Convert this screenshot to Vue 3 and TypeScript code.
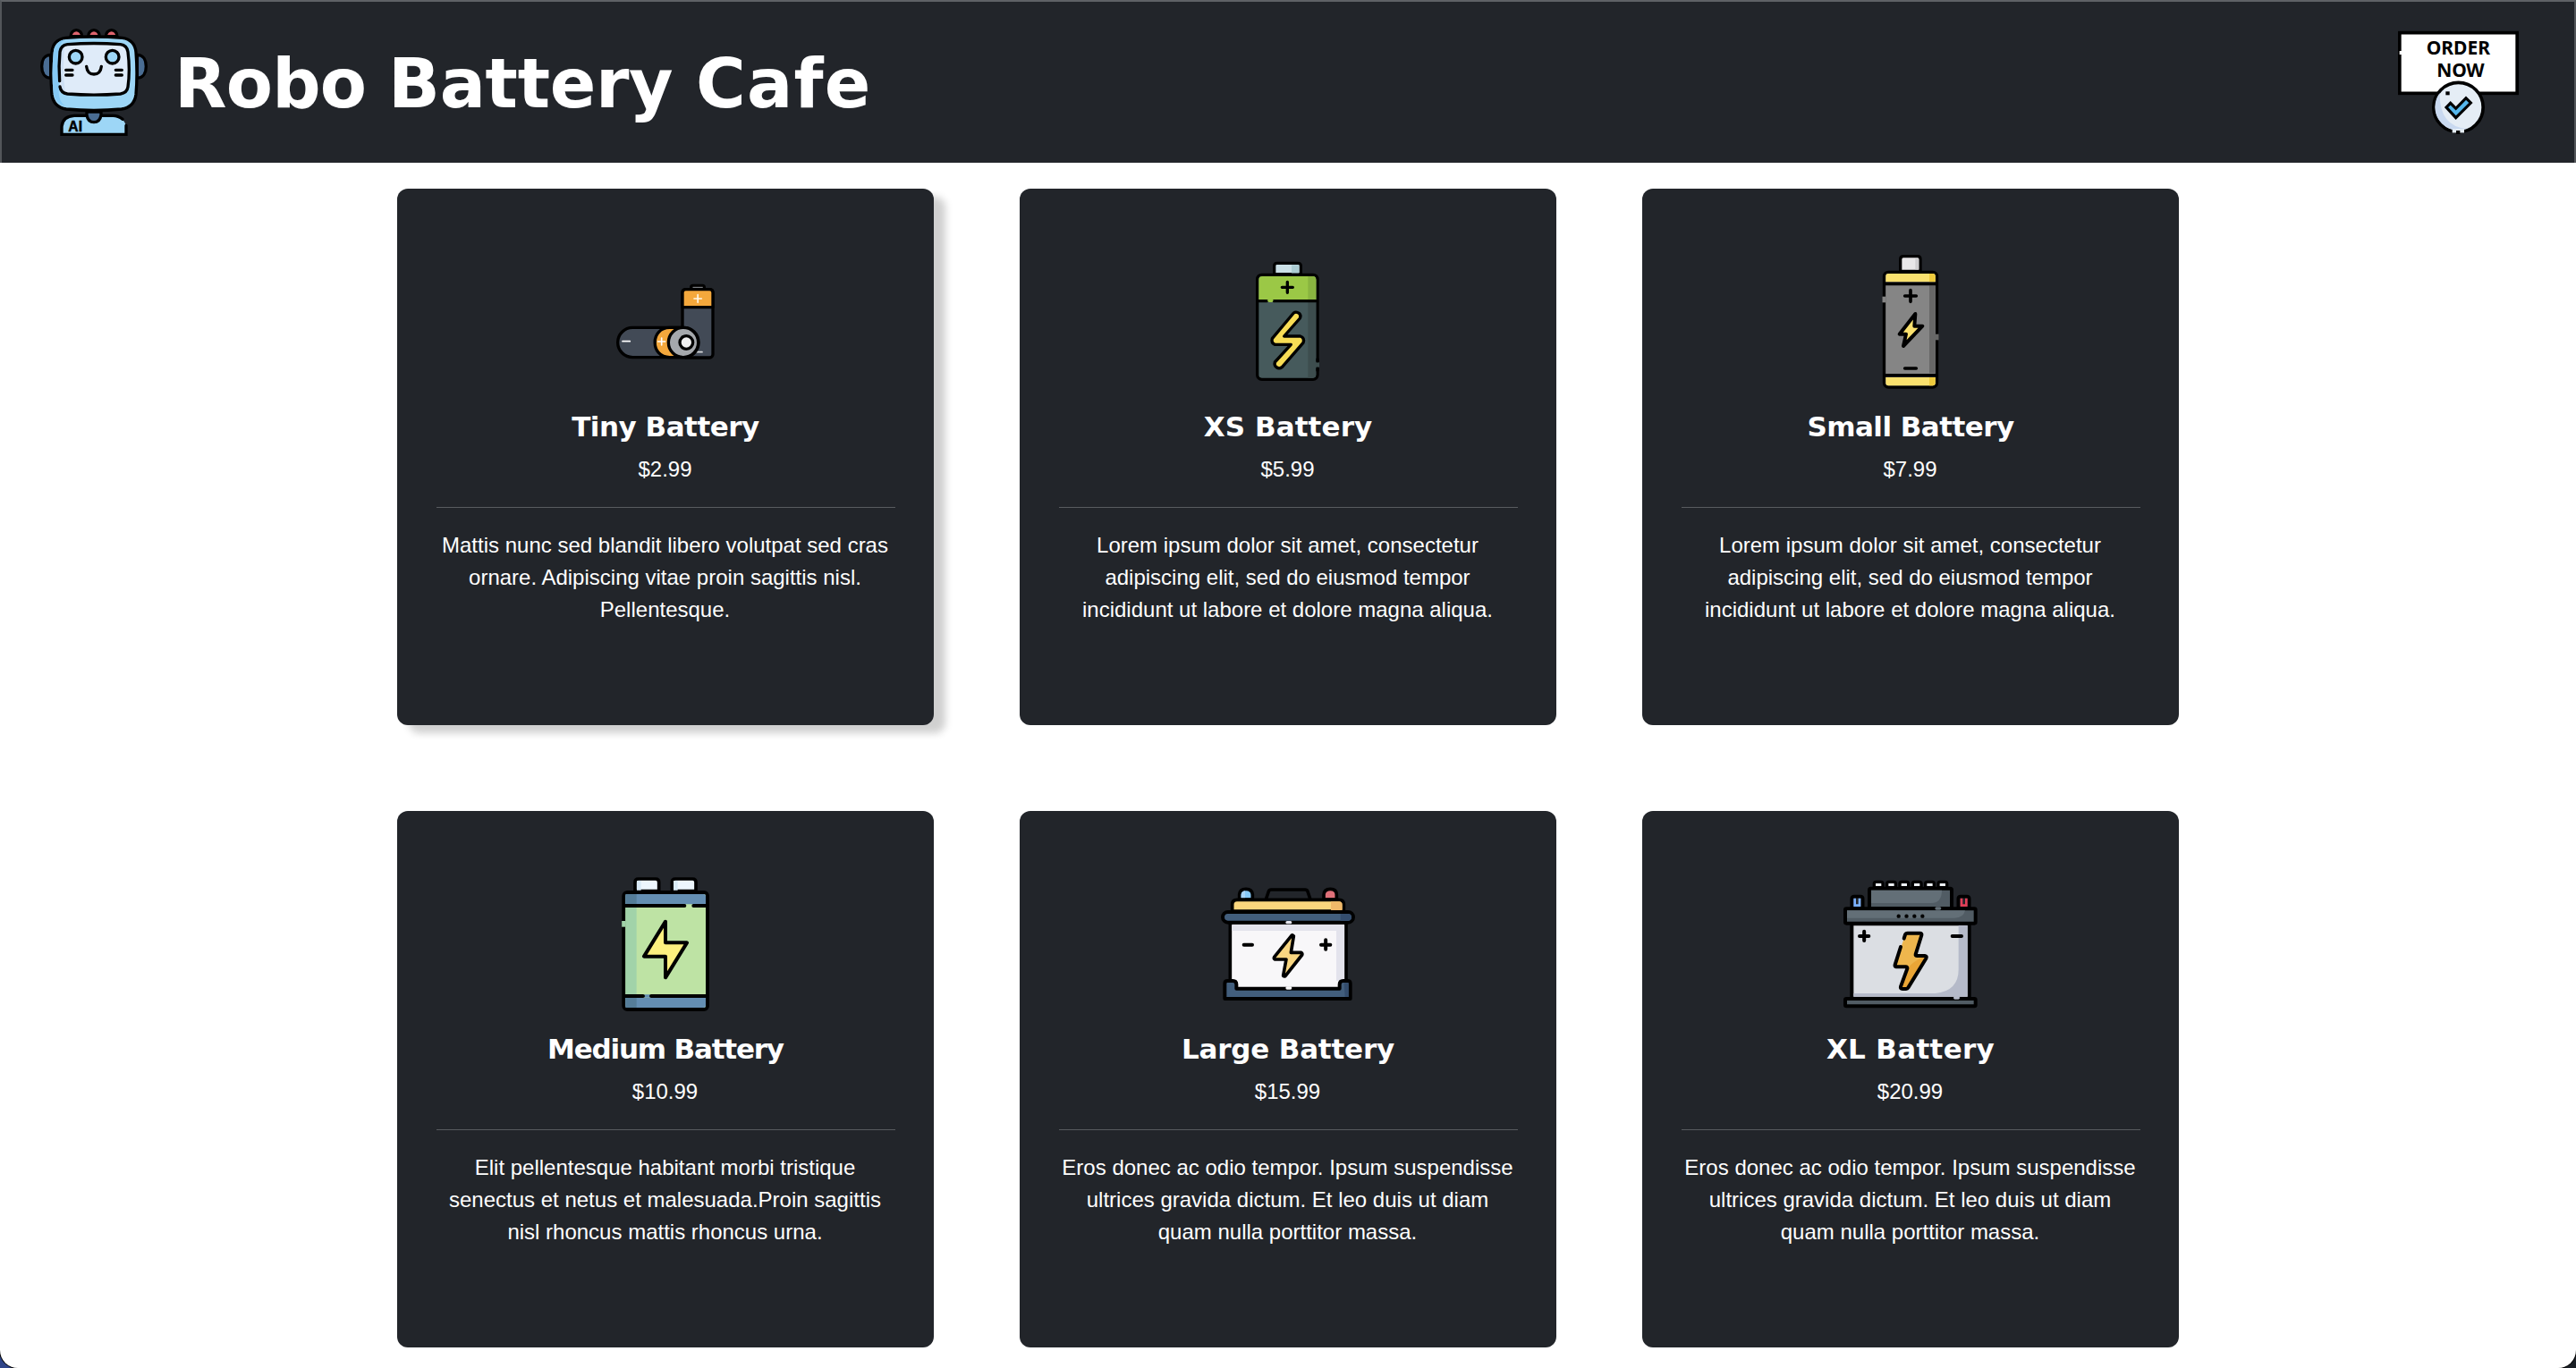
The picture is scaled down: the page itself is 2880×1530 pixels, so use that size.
<script setup lang="ts">
type IconName = 'tiny' | 'xs' | 'small' | 'medium' | 'large' | 'xl'

interface Product {
  icon: IconName
  name: string
  price: string
  lines: string[]
  tracking: number
  raised?: boolean
}

const lorem = [
  'Lorem ipsum dolor sit amet, consectetur',
  'adipiscing elit, sed do eiusmod tempor',
  'incididunt ut labore et dolore magna aliqua.',
]
const eros = [
  'Eros donec ac odio tempor. Ipsum suspendisse',
  'ultrices gravida dictum. Et leo duis ut diam',
  'quam nulla porttitor massa.',
]

const products: Product[] = [
  {
    icon: 'tiny',
    name: 'Tiny Battery',
    price: '$2.99',
    lines: ['Mattis nunc sed blandit libero volutpat sed cras', 'ornare. Adipiscing vitae proin sagittis nisl.', 'Pellentesque.'],
    tracking: -0.5,
    raised: true,
  },
  { icon: 'xs', name: 'XS Battery', price: '$5.99', lines: lorem, tracking: 0.1 },
  { icon: 'small', name: 'Small Battery', price: '$7.99', lines: lorem, tracking: -0.55 },
  {
    icon: 'medium',
    name: 'Medium Battery',
    price: '$10.99',
    lines: ['Elit pellentesque habitant morbi tristique', 'senectus et netus et malesuada.Proin sagittis', 'nisl rhoncus mattis rhoncus urna.'],
    tracking: -1.2,
  },
  { icon: 'large', name: 'Large Battery', price: '$15.99', lines: eros, tracking: -0.2 },
  { icon: 'xl', name: 'XL Battery', price: '$20.99', lines: eros, tracking: 0.3 },
]

const viewBoxes: Record<IconName, string> = {
  tiny: '-3 -90 510 570',
  xs: '-75 -30 510 570',
  small: '-87 -30 510 570',
  medium: '-33 -12 510 570',
  large: '15 -42 510 570',
  xl: '18 -42 510 570',
}
</script>

<template>
  <div class="window">
    <div class="page">
      <header class="header">
        <div class="brand">
          <svg class="robot" viewBox="135 96 360 360" fill="none" stroke="#000" stroke-width="10" stroke-linecap="round" stroke-linejoin="round">
            <g fill="#df646e">
              <path d="M237 122a19 21 0 0 1 38 0zM296 122a19 21 0 0 1 38 0zM355 122a19 21 0 0 1 38 0z" />
            </g>
            <path fill="#4a6d93" d="M170 184c-22 0-30 20-30 39s8 39 30 39zM460 184c22 0 30 20 30 39s-8 39-30 39z" />
            <path fill="#9dd6f6" d="M220 127q95-8 190 0 42 6 46 48 6 72 0 142-6 42-48 49-93 9-186 0-42-7-48-49-6-70 0-142 4-42 46-48z" />
            <path fill="#85c9f4" stroke="none" d="M218 133q-35 6-39 46-7 70 0 132 6 38 40 44-21-12-22-47V180q2-36 21-47z" />
            <path fill="#dfebf9" stroke="none" d="M226 149q89-7 178 0 22 3 25 25 8 60 0 118-3 20-25 23-89 7-178 0-22-3-25-23-6-60 0-118 3-22 25-25z" />
            <path stroke="#cfe0f4" d="M211 164q-7 68 2 140" />
            <path d="M200 272q-4-50 1-98 3-22 25-25 89-7 178 0 22 3 25 25 8 60 0 118-3 20-25 23-89 7-178 0-22-3-25-24" />
            <circle cx="254" cy="191" r="22" fill="#9dd6f6" />
            <circle cx="377" cy="191" r="22" fill="#9dd6f6" />
            <path d="M290 223q3 26 25 26t25-26M221 235h22M221 252h22M388 235h21M388 252h21" />
            <path fill="#9dd6f6" stroke="none" d="M207 451v-24q6-36 42-38h130q38 2 45 38v24z" />
            <path stroke-linejoin="miter" d="M411 400q-14-12-32-12h-130q-39 2-42 37v26h216v-30" />
            <path fill="#4a6d93" d="M291 375v11q4 24 24 24t24-24v-11z" />
            <text x="229" y="440" class="ai" fill="#000" stroke="#000" stroke-width="1.500">AI</text>
          </svg>
          <h1 class="title"><span>Robo</span><span>Battery</span><span>Cafe</span></h1>
        </div>
        <svg class="order" viewBox="123 102 405 348" fill="none" stroke="#000">
          <rect x="128.500" y="110" width="394" height="203" fill="#fff" stroke-width="11" />
          <rect x="128" y="171" width="12" height="12" fill="#fff" stroke="none" />
          <text class="order-text" x="325" y="182" textLength="214" text-anchor="middle">ORDER</text>
          <text class="order-text" x="333" y="258" textLength="160" text-anchor="middle">NOW</text>
          <circle cx="325.500" cy="360" r="83" fill="#e5edf5" stroke-width="11" />
          <path fill="#c9d9f0" stroke="none" d="M263 312a78 78 0 0 0 90 120q-92-8-90-120z" />
          <path d="M285 360l14-14 18 18 34-35 16 16-50 50z" fill="#56b7ec" stroke-width="9.500" />
          <rect x="283" y="307" width="13" height="12" fill="#000" stroke="none" />
          <path stroke="#e5edf5" stroke-width="13" d="M305 439h40" />
          <rect x="318" y="438" width="13" height="13" fill="#000" stroke="none" />
        </svg>
      </header>

      <main class="grid">
        <article v-for="p in products" :key="p.name" class="card" :class="{ raised: p.raised }">
          <svg class="icon" :viewBox="viewBoxes[p.icon]" fill="none" stroke="#000" stroke-width="10" stroke-linecap="round" stroke-linejoin="round">
            <g v-if="p.icon === 'tiny'">
              <path fill="#22252a" d="M338 99v-5q0-6 6-6h32q6 0 6 6v5" />
              <path stroke="#8d9094" stroke-width="3" d="M345 94h31" />
              <rect x="309" y="101" width="102" height="229" rx="11" fill="#424a56" />
              <path fill="#f4a83c" d="M309 161v-49q0-11 11-11h80q11 0 11 11v49z" />
              <path stroke="#fff8e8" stroke-width="5" d="M348 132h25M360.500 119v26" />
              <path stroke="#d5d7da" stroke-width="5" d="M358 311h17" />
              <rect x="92" y="229" width="271" height="100" rx="50" fill="#424a56" />
              <path fill="#f4a83c" d="M266 229c-66 0-66 100 0 100h45V229z" />
              <path stroke="#fff" stroke-width="5" d="M227 276h24M239 264v24M108 275h25" />
              <circle cx="312" cy="279" r="50" fill="#a5a8ac" />
              <circle cx="322" cy="279" r="22" fill="#f0f0f0" />
            </g>

            <g v-else-if="p.icon === 'xs'">
              <path fill="#cadfe6" d="M134 110V82q0-9 9-9h70q10 0 10 9v28z" />
              <path fill="#abcbd2" stroke="none" d="M192 79h25v28h-25z" />
              <rect x="77" y="112" width="202" height="351" rx="15" fill="#465a5c" />
              <path fill="#9bc846" stroke="none" d="M82 199v-70q0-12 12-12h168q12 0 12 12v70z" />
              <path fill="#89b440" stroke="none" d="M247 117h15q12 0 12 12v66h-27z" />
              <path fill="#3d4d4e" stroke="none" d="M247 204h27v242q0 12-12 12h-15z" />
              <path d="M82 200h27M133 200h141M160 154h36M178 136v36" />
              <path stroke="#9bc846" d="M117 199h8" />
              <path stroke="#3d4d4e" stroke-linecap="butt" stroke-width="12" d="M279 406v16" />
              <path d="M279 395v6M279 427v6" />
              <path fill="#f8dd55" d="M199 240q8-6 18 1 8 7 3 17l-53 60h54q16 6 10 22l-71 82q-10 7-19 0-8-6-5-17l54-59h-54q-13-5-9-20z" />
            </g>

            <g v-else-if="p.icon === 'small'">
              <path fill="#e8e7e8" d="M134 100V60q0-10 10-10h48q9 0 9 10v40z" />
              <path fill="#cfced0" stroke="none" d="M184 58h12v36h-12z" />
              <rect x="79.500" y="103" width="177" height="386" rx="14" fill="#858585" />
              <path fill="#fae16e" stroke="none" d="M85 136v-19q0-9 9-9h148q9 0 9 9v19zM85 456v19q0 9 9 9h148q9 0 9-9v-19z" />
              <path fill="#efcb3d" stroke="none" d="M231 108h11q9 0 9 9v19h-20zM231 456h20v19q0 9-9 9h-11z" />
              <path fill="#676767" stroke="none" d="M231 148h20v294h-20z" />
              <path stroke-linecap="butt" stroke-width="11" d="M80 142h177M80 449.500h177" />
              <path stroke="#858585" stroke-linecap="butt" stroke-width="12" d="M79.500 185v20" />
              <path stroke="#676767" stroke-linecap="butt" stroke-width="12" d="M256.500 311v20" />
              <path stroke-width="11" d="M149 183h38M168 164v38M149 426h38" />
              <path fill="#fae16e" stroke-width="12" d="M184 243l-53 68h22l-9 40 64-67h-27z" />
            </g>

            <g v-else-if="p.icon === 'medium'">
              <path fill="#edf6fd" stroke-width="11" d="M120 110V80q0-11 11-11h58q11 0 11 11v30zM244 110V80q0-11 11-11h58q11 0 11 11v30z" />
              <path fill="#d9eaf6" stroke="none" d="M126 75h14v32h-14zM249 75h14v32h-14z" />
              <rect x="82" y="114" width="281" height="393" rx="12" fill="#bee3a4" stroke-width="12" />
              <path fill="#a1d3a9" stroke="none" d="M88 165h37v292H88z" />
              <path fill="#648eb2" stroke="none" d="M88 154v-26q0-8 8-8h253q8 0 8 8v26zM88 468v25q0 8 8 8h253q8 0 8-8v-25z" />
              <path fill="#557d99" stroke="none" d="M88 120h37v34H88zM88 468h37v33H88z" />
              <path stroke="#bee3a4" d="M296 161h12" />
              <path stroke="#648eb2" d="M154 462h14" />
              <path stroke="#a1d3a9" stroke-linecap="butt" stroke-width="13" d="M82 210v20" />
              <path stroke-width="12" d="M88 159h198M316 159h42M88 462h59M174 462h184" />
              <path fill="#fcf07f" stroke-width="12" d="M222 212l-72 117h72v71l72-117h-72z" />
            </g>

            <g v-else-if="p.icon === 'large'">
              <path fill="#86c9f8" stroke-width="11" d="M107 108V92q1-19 22-19t22 19v16z" />
              <path fill="#df7079" stroke-width="11" d="M390 108V92q1-19 22-19t21 19v16z" />
              <path fill="#a9d5fa" stroke="none" d="M113 103V92q1-12 13-13v24z" />
              <path stroke-width="11" d="M197 105l8-24q2-6 9-6h113q7 0 9 6l8 24" />
              <path fill="#fad67d" stroke-width="11" d="M83 147v-22q0-16 16-16h342q16 0 16 16v22z" />
              <path fill="#f0b96a" stroke="none" d="M414 115h27q11 0 11 11v19h-38z" />
              <path fill="#f8f7f9" stroke-width="11" d="M76 188h389v230H76z" />
              <path fill="#e3e3ec" stroke="none" d="M82 191h377v190h-27V213H82z" />
              <rect x="51" y="150" width="438" height="35" rx="17.500" fill="#425e7c" stroke-width="12" />
              <path fill="#344d6d" stroke="none" d="M446 156h24q13 0 13 12t-13 12h-24z" />
              <path stroke="#e3e3ec" d="M267 185h11" />
              <path fill="#425e7c" stroke-width="12" d="M58 441V390q0-9 9-9h18q12 0 12 12v14h346v-14q0-12 12-12h15q9 0 9 9v51z" />
              <path fill="#344d6d" stroke="none" d="M458 388h15v47h-12z" />
              <path stroke="#f8f7f9" d="M267 405h11" />
              <path stroke-width="12" d="M122 260h28M381 260h31M396.500 244v31" />
              <path fill="#f9d681" stroke-width="11" d="M282 229q4-3 7 2l-9 55h34q5 3 3 8l-56 71q-6 2-7-2l10-54h-38q-5-3-2-8z" />
            </g>

            <g v-else>
              <path fill="#edf1f5" d="M151 68V55q0-6 6-6h17q6 0 6 6v13zM194 68V55q0-6 6-6h17q6 0 6 6v13zM237 68V55q0-6 6-6h17q6 0 6 6v13zM280 68V55q0-6 6-6h17q6 0 6 6v13zM323 68V55q0-6 6-6h17q6 0 6 6v13zM366 68V55q0-6 6-6h17q6 0 6 6v13z" />
              <path fill="#22252a" stroke-width="11" d="M76 137v-31q0-8 8-8h21q8 0 8 8v31zM433 137v-31q0-8 8-8h21q8 0 8 8v31z" />
              <path stroke="#7bb0ff" stroke-linecap="butt" stroke-linejoin="miter" stroke-width="8" d="M86 104v24h16v-24" />
              <path stroke="#e23f57" stroke-linecap="butt" stroke-linejoin="miter" stroke-width="8" d="M444 104v24h16v-24" />
              <path fill="#515c64" stroke-width="12" d="M135 139V76q0-5 5-5h266q5 0 5 5v63z" />
              <path fill="#636f77" stroke="none" d="M141 77h237q0 43-36 43H141z" />
              <path fill="#dbdee3" stroke-width="12" d="M76 190h394v250H76z" />
              <path fill="#b5bac9" stroke="none" d="M82 434v-11h274q78-7 78-80V194h30v240z" />
              <rect x="54" y="139" width="437" height="49" rx="4" fill="#515c64" stroke-width="12" />
              <path fill="#636f77" stroke="none" d="M60 145h396q-6 25-34 25H60z" />
              <path stroke="#636f77" d="M360 138h11" />
              <path stroke-width="13" d="M233 164h.1M259.500 164h.1M286 164h.1M313 164h.1" />
              <rect x="54" y="441" width="437" height="25" rx="4" fill="#515c64" stroke-width="12" />
              <path stroke="#b5bac9" d="M422 438h11" />
              <path stroke-width="12" d="M102 231h31M117.500 215v31M413 231h31" />
              <path fill="#eeb64d" stroke="none" d="M257 221h54l-20 76h36l-63 111h-23l23-74h-45z" />
              <path fill="#e9a536" stroke="none" d="M318 299q-54 26-57 50l-20 59h21l64-106z" />
              <path stroke-width="12" d="M251 239l4-13q2-5 8-5h41q8 0 6 7l-20 64q-1 5 5 5h26q8 1 4 9l-60 98q-2 4-7 4h-12q-8 0-6-8l22-60q1-6-5-6h-32q-6-1-4-7l19-60" />
            </g>
          </svg>
          <h2 class="name" :style="{ letterSpacing: p.tracking + 'px' }">{{ p.name }}</h2>
          <p class="price">{{ p.price }}</p>
          <hr class="rule" />
          <p class="desc">
            <span v-for="line in p.lines" :key="line">{{ line }}</span>
          </p>
        </article>
      </main>
    </div>
  </div>
</template>

<style>
body {
  margin: 0;
}
</style>

<style scoped>
.window {
  height: 1530px;
  overflow: hidden;
  background: linear-gradient(90deg, #2f4488 0, #2f4488 50%, #1b2026 50%);
}
.page {
  box-sizing: border-box;
  height: 1530px;
  background: #fff;
  border-radius: 0 0 20px 20px;
  box-shadow: 0 0 0 1px #000;
  overflow: hidden;
}
.header {
  box-sizing: border-box;
  height: 182px;
  display: flex;
  justify-content: space-between;
  align-items: flex-start;
  background: #22252a;
  border: 2px solid #53565a;
  border-top-color: #5f6266;
  border-bottom: 0;
  padding: 30px 62px 0 43px;
}
.brand {
  display: flex;
  align-items: flex-start;
}
.robot {
  width: 120px;
  height: 120px;
  flex: none;
}
.ai {
  font: 700 47px 'Liberation Sans', sans-serif;
}
.title {
  margin: 12px 0 0 26px;
  display: flex;
  font: 700 76px/100px 'DejaVu Sans', sans-serif;
  color: #fff;
  letter-spacing: 1.200px;
  white-space: nowrap;
}
.title span:nth-child(1) {
  width: 239px;
  margin-left: 4px;
  letter-spacing: -0.800px;
}
.title span:nth-child(2) {
  width: 344px;
  letter-spacing: -0.300px;
}
.order {
  width: 135px;
  height: 116px;
  margin-top: 2px;
}
.order-text {
  font: 700 63px 'Noto Sans', 'Open Sans', sans-serif;
  fill: #000;
  stroke: none;
}
.grid {
  display: grid;
  grid-template-columns: repeat(3, 600px);
  grid-auto-rows: 600px;
  gap: 96px;
  justify-content: center;
  padding-top: 29px;
}
.card {
  box-sizing: border-box;
  display: flex;
  flex-direction: column;
  align-items: center;
  padding: 49px 43px 0 44px;
  background: #22252a;
  border-radius: 12px;
  color: #fff;
}
.card.raised {
  box-shadow: 13px 9px 8px #d0d0d0;
}
.icon {
  width: 170px;
  height: 190px;
  margin-right: 2px;
  flex: none;
}
.name {
  margin: 7px 1px 0 0;
  font: 700 31px/40px 'DejaVu Sans', sans-serif;
  white-space: nowrap;
}
.price {
  margin: 10px 2px 0 0;
  font: 24px/36px 'Liberation Sans', Arial, sans-serif;
}
.rule {
  width: 100%;
  height: 1px;
  margin: 24px 0;
  border: 0;
  background: #585b5f;
}
.desc {
  margin: 0 2px 0 0;
  display: flex;
  flex-direction: column;
  align-items: center;
  font: 24px/36px 'Liberation Sans', Arial, sans-serif;
  white-space: nowrap;
}
</style>
